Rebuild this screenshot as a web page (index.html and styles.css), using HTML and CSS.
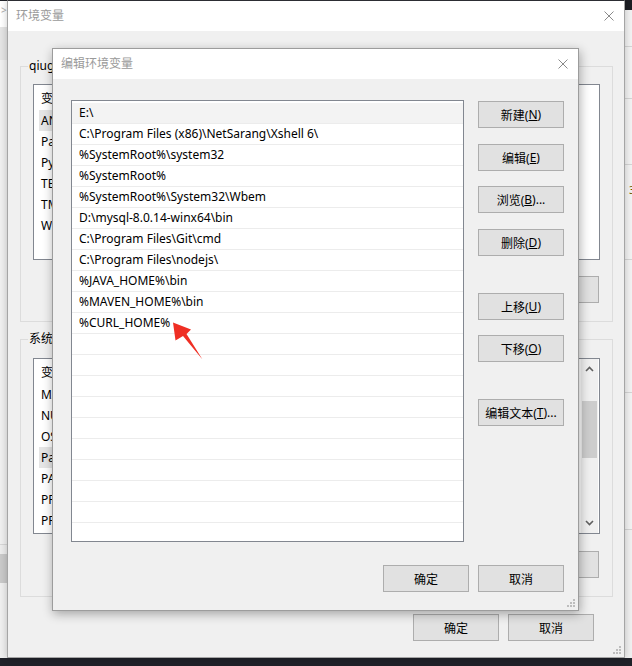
FILE: index.html
```html
<!DOCTYPE html>
<html lang="zh-CN">
<head>
<meta charset="utf-8">
<title>编辑环境变量</title>
<link rel="stylesheet" href="styles.css">
</head>
<body>
<div class="desktop">
  <div class="back-left">
    <div class="bl-top">&gt;</div>
    <div class="bl-mid"></div>
    <div class="bl-fill"></div>
    <div class="bl-line"></div>
    <div class="bl-dark"></div>
    <div class="bl-light"></div>
  </div>
  <div class="back-right">
    <div class="br-top"></div>
    <div class="br-cell c1"></div>
    <div class="br-cell c2"></div>
    <div class="br-cell c3"></div>
    <div class="br-cell c4"><span class="br-char">3</span></div>
    <div class="br-cell c5"></div>
    <div class="br-cell c6"></div>
  </div>

  <div class="window win-outer">
    <div class="titlebar">
      <span class="title">环境变量</span>
      <svg class="close" width="10" height="10" viewBox="0 0 10 10"><path d="M0.5 0.5L9.5 9.5M9.5 0.5L0.5 9.5" stroke="#8a8a8a" stroke-width="1" fill="none"/></svg>
    </div>
    <div class="outer-body">
      <div class="group g-user">
        <span class="legend">qiuguan 的用户变量(<u>U</u>)</span>
        <div class="lv">
          <div class="lv-col">
            <div class="lv-head"><span class="lv-c1">变量</span><span>值</span></div>
            <div class="lv-row sel">ANDROID_HOME</div>
            <div class="lv-row">Path</div>
            <div class="lv-row">PyCharm Community Edition</div>
            <div class="lv-row">TEMP</div>
            <div class="lv-row">TMP</div>
            <div class="lv-row">WebStorm</div>
          </div>
        </div>
        <div class="btnrow">
          <button class="btn">新建(<u>N</u>)...</button>
          <button class="btn">编辑(<u>E</u>)...</button>
          <button class="btn">删除(<u>D</u>)</button>
        </div>
      </div>
      <div class="group g-sys">
        <span class="legend">系统变量(<u>S</u>)</span>
        <div class="lv">
          <div class="lv-col">
            <div class="lv-head"><span class="lv-c1">变量</span><span>值</span></div>
            <div class="lv-row">MAVEN_HOME</div>
            <div class="lv-row">NUMBER_OF_PROCESSORS</div>
            <div class="lv-row">OS</div>
            <div class="lv-row sel">Path</div>
            <div class="lv-row">PATHEXT</div>
            <div class="lv-row">PROCESSOR_ARCHITECTURE</div>
            <div class="lv-row">PROCESSOR_IDENTIFIER</div>
          </div>
          <div class="scrollbar">
            <div class="sb-btn"><svg width="9" height="6" viewBox="0 0 9 6"><path d="M1 5L4.5 1.5L8 5" stroke="#606060" stroke-width="1.6" fill="none"/></svg></div>
            <div class="sb-track"><div class="sb-thumb"></div></div>
            <div class="sb-btn"><svg width="9" height="6" viewBox="0 0 9 6"><path d="M1 1L4.5 4.5L8 1" stroke="#606060" stroke-width="1.6" fill="none"/></svg></div>
          </div>
        </div>
        <div class="btnrow">
          <button class="btn">新建(<u>W</u>)...</button>
          <button class="btn">编辑(<u>I</u>)...</button>
          <button class="btn">删除(<u>L</u>)</button>
        </div>
      </div>
      <div class="btnrow bottom-row">
        <button class="btn">确定</button>
        <button class="btn">取消</button>
      </div>
    </div>
    <svg class="grip" width="8" height="8" viewBox="0 0 8 8"><g fill="#bdbdbd"><rect x="6" y="0" width="2" height="2"/><rect x="3" y="3" width="2" height="2"/><rect x="6" y="3" width="2" height="2"/><rect x="0" y="6" width="2" height="2"/><rect x="3" y="6" width="2" height="2"/><rect x="6" y="6" width="2" height="2"/></g></svg>
  </div>

  <div class="window win-inner">
    <div class="titlebar">
      <span class="title">编辑环境变量</span>
      <svg class="close" width="10" height="10" viewBox="0 0 10 10"><path d="M0.5 0.5L9.5 9.5M9.5 0.5L0.5 9.5" stroke="#8a8a8a" stroke-width="1" fill="none"/></svg>
    </div>
    <div class="inner-body">
      <div class="inner-main">
        <div class="pathlist">
          <div class="pl-row sel">E:\</div>
          <div class="pl-row">C:\Program Files (x86)\NetSarang\Xshell 6\</div>
          <div class="pl-row">%SystemRoot%\system32</div>
          <div class="pl-row">%SystemRoot%</div>
          <div class="pl-row">%SystemRoot%\System32\Wbem</div>
          <div class="pl-row">D:\mysql-8.0.14-winx64\bin</div>
          <div class="pl-row">C:\Program Files\Git\cmd</div>
          <div class="pl-row">C:\Program Files\nodejs\</div>
          <div class="pl-row">%JAVA_HOME%\bin</div>
          <div class="pl-row">%MAVEN_HOME%\bin</div>
          <div class="pl-row">%CURL_HOME%</div>
          <div class="pl-row"></div>
          <div class="pl-row"></div>
          <div class="pl-row"></div>
          <div class="pl-row"></div>
          <div class="pl-row"></div>
          <div class="pl-row"></div>
          <div class="pl-row"></div>
          <div class="pl-row"></div>
          <div class="pl-row"></div>
          <div class="pl-row"></div>
        </div>
        <div class="btncol">
          <button class="btn b-new">新建(<u>N</u>)</button>
          <button class="btn b-edit">编辑(<u>E</u>)</button>
          <button class="btn b-browse">浏览(<u>B</u>)...</button>
          <button class="btn b-del">删除(<u>D</u>)</button>
          <button class="btn b-up">上移(<u>U</u>)</button>
          <button class="btn b-down">下移(<u>O</u>)</button>
          <button class="btn b-text">编辑文本(<u>T</u>)...</button>
        </div>
      </div>
      <div class="btnrow inner-bottom">
        <button class="btn">确定</button>
        <button class="btn">取消</button>
      </div>
    </div>
    <svg class="grip" width="8" height="8" viewBox="0 0 8 8"><g fill="#bdbdbd"><rect x="6" y="0" width="2" height="2"/><rect x="3" y="3" width="2" height="2"/><rect x="6" y="3" width="2" height="2"/><rect x="0" y="6" width="2" height="2"/><rect x="3" y="6" width="2" height="2"/><rect x="6" y="6" width="2" height="2"/></g></svg>
  </div>

  <svg class="arrow" width="45" height="50" viewBox="0 0 45 50"><polygon points="8,7.5 26,14.5 21.5,19 37.5,44.5 18,21 10.5,25.5" fill="#ef2f24"/></svg>
</div>
</body>
</html>
```

FILE: styles.css
```css
* { box-sizing: border-box; }
html, body { margin: 0; padding: 0; }
body {
  width: 632px;
  height: 666px;
  overflow: hidden;
  background: #1f2128;
  font-family: "Noto Sans", "Noto Sans CJK SC", sans-serif;
  font-size: 12px;
  color: #000;
}
.desktop { position: relative; width: 632px; height: 666px; }

/* background windows */
.back-left {
  position: absolute; left: 0; top: 1px; width: 8px; height: 657px;
  display: flex; flex-direction: column; background: #f0f0f0;
}
.bl-top { height: 26px; background: #fff; color: #aaa; font-size: 10px; line-height: 18px; padding-left: 1px; }
.bl-mid { height: 33px; background: #e4e4e4; }
.bl-fill { flex: 1; background: #efefef; }
.bl-line { height: 10px; background: #ececec; border-top: 1px solid #d6d6d6; }
.bl-dark { height: 29px; background: #c9c9c9; }
.bl-light { height: 75px; background: #efefef; }

.back-right {
  position: absolute; left: 624px; top: 0; width: 8px; height: 658px;
  display: flex; flex-direction: column; background: #f0f0f0;
}
.br-top { height: 10px; background: #1c1d23; }
.br-cell { border-bottom: 1px solid #d4d4d4; background: #f2f2f2; }
.c1 { height: 37px; }
.c2 { height: 52px; }
.c3 { height: 66px; }
.c4 { height: 95px; position: relative; }
.c5 { height: 133px; }
.c6 { height: 137px; }
.br-char { position: absolute; left: 5px; top: 17px; color: #6a5a00; font-size: 11px; }

/* windows */
.window {
  position: absolute;
  background: #f0f0f0;
  display: flex;
  flex-direction: column;
}
.win-outer {
  left: 7px; top: 0; width: 618px; height: 658px;
  border: 1px solid #a5a5a5;
  border-top-color: #2c2d33;
  box-shadow: 0 0 7px rgba(0,0,0,0.22);
}
.win-inner {
  left: 52px; top: 48px; width: 527px; height: 563px;
  border: 1px solid #9c9c9c;
  box-shadow: 1px 3px 10px rgba(0,0,0,0.32);
}
.titlebar {
  flex: none;
  height: 30px;
  background: #fff;
  display: flex;
  align-items: center;
  justify-content: space-between;
  padding: 0 10px 0 8px;
}
.title { color: #9a9a9a; font-size: 12px; line-height: 16px; }
.close { display: block; }
.grip { position: absolute; right: 3px; bottom: 3px; }

/* outer body */
.outer-body { flex: 1; padding: 35px 0 0 12px; display: flex; flex-direction: column; }
.group {
  position: relative;
  width: 593px;
  border: 1px solid #dcdcdc;
  padding: 17px 12px 18px 12px;
}
.g-sys { margin-top: 17px; padding-top: 18px; }
.legend {
  position: absolute; left: 7px; top: -9px;
  background: #f0f0f0; padding: 0 1px;
  line-height: 16px; white-space: nowrap;
}
.lv {
  height: 176px;
  background: #fff;
  border: 1px solid #828790;
  display: flex;
  overflow: hidden;
}
.lv-col { flex: 1; min-width: 0; }
.lv-head { height: 25px; display: flex; align-items: center; padding-left: 7px; white-space: nowrap; }
.lv-c1 { width: 160px; }
.lv-row { height: 21px; line-height: 22px; margin-left: 5px; padding-left: 2px; white-space: nowrap; }
.lv-row.sel { background: #e5e5e5; width: 150px; }
.scrollbar { width: 17px; flex: none; background: #f0f0f0; display: flex; flex-direction: column; margin-right: 1px; }
.sb-btn { height: 20px; display: flex; align-items: center; justify-content: center; }
.sb-track { flex: 1; padding: 22px 1px 0 1px; }
.sb-thumb { height: 57px; background: #cdcdcd; }

.btnrow { display: flex; justify-content: flex-end; gap: 9px; }
.group .btnrow { margin-top: 16px; padding-right: 1px; }
.g-sys .btnrow { margin-top: 17px; }
.bottom-row { margin-top: 17px; padding-right: 30px; }

.btn {
  width: 86px;
  height: 27px;
  flex: none;
  padding: 0;
  margin: 0;
  background: #e1e1e1;
  border: 1px solid #adadad;
  border-radius: 0;
  font: inherit;
  font-size: 12px;
  color: #000;
  display: flex;
  align-items: center;
  justify-content: center;
  white-space: nowrap;
}
.btn u { text-underline-offset: 1px; }

/* inner body */
.inner-body { flex: 1; padding: 21px 14px 18px 18px; display: flex; flex-direction: column; }
.inner-main { display: flex; gap: 14px; }
.pathlist {
  width: 393px;
  height: 442px;
  background: #fff;
  border: 1px solid #828790;
  padding-top: 2px;
  overflow: hidden;
}
.pl-row {
  height: 21px;
  line-height: 20px;
  padding-left: 7px;
  border-bottom: 1px solid #ececec;
  white-space: nowrap;
}
.pl-row.sel { background: #f3f3f3; }
.btncol { display: flex; flex-direction: column; }
.b-new { margin-top: 1px; }
.b-edit { margin-top: 16px; }
.b-browse { margin-top: 15px; }
.b-del { margin-top: 16px; }
.b-up { margin-top: 37px; }
.b-down { margin-top: 15px; }
.b-text { margin-top: 37px; }
.inner-bottom { margin-top: 23px; }

.arrow { position: absolute; left: 165px; top: 315px; }
```
